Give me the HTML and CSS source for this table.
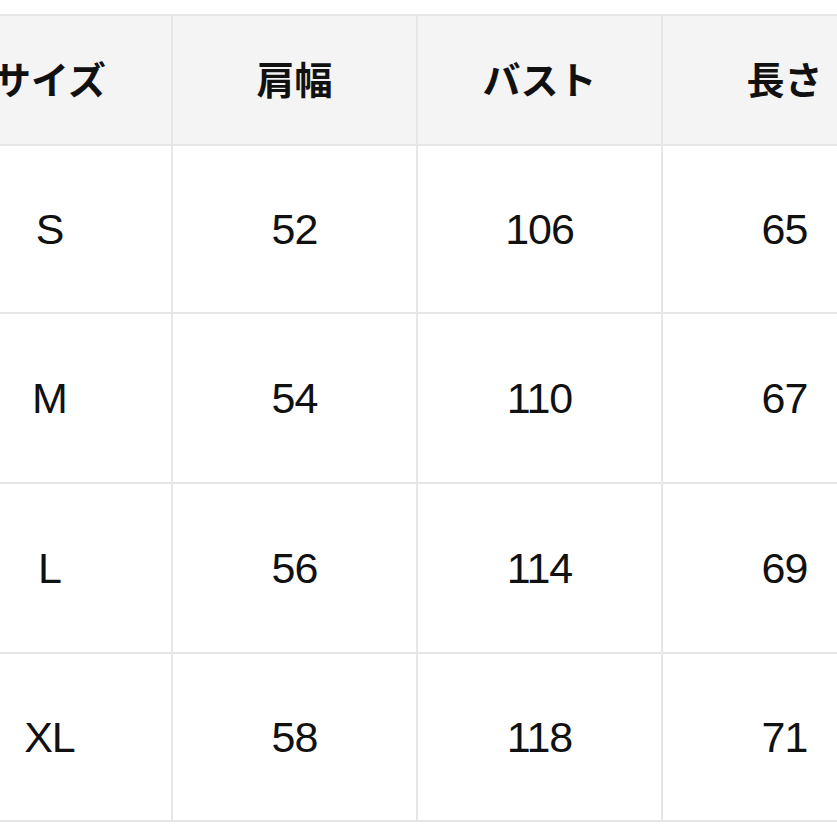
FILE: index.html
```html
<!DOCTYPE html>
<html lang="ja">
<head>
<meta charset="utf-8">
<link rel="stylesheet" href="styles.css">
</head>
<body>
<div class="size-table">
  <div class="cell head">サイズ</div>
  <div class="cell head">肩幅</div>
  <div class="cell head">バスト</div>
  <div class="cell head">長さ</div>

  <div class="cell">S</div>
  <div class="cell">52</div>
  <div class="cell">106</div>
  <div class="cell">65</div>

  <div class="cell">M</div>
  <div class="cell">54</div>
  <div class="cell">110</div>
  <div class="cell">67</div>

  <div class="cell">L</div>
  <div class="cell">56</div>
  <div class="cell">114</div>
  <div class="cell">69</div>

  <div class="cell">XL</div>
  <div class="cell">58</div>
  <div class="cell">118</div>
  <div class="cell">71</div>
</div>
</body>
</html>
```

FILE: styles.css
```css
html, body {
  margin: 0;
  padding: 0;
  background: #ffffff;
  overflow: hidden;
}

body {
  width: 837px;
  height: 837px;
}

.size-table {
  display: grid;
  grid-template-columns: repeat(4, 245px);
  grid-template-rows: 130px 168px 170px 170px 168px;
  margin: 14px 0 0 -72px;
  width: 980px;
  border-top: 2px solid #e6e6e6;
  font-family: "Liberation Sans", "Noto Sans CJK JP", sans-serif;
  color: #111111;
}

.cell {
  box-sizing: border-box;
  border-right: 2px solid #e6e6e6;
  border-bottom: 2px solid #e6e6e6;
  display: flex;
  align-items: center;
  justify-content: center;
  font-size: 43px;
  letter-spacing: -1px;
}

.cell.head {
  background: #f4f4f4;
  font-family: "Noto Sans CJK JP", sans-serif;
  font-weight: 700;
  font-size: 38px;
  letter-spacing: 0;
  padding-bottom: 6px;
}
```
